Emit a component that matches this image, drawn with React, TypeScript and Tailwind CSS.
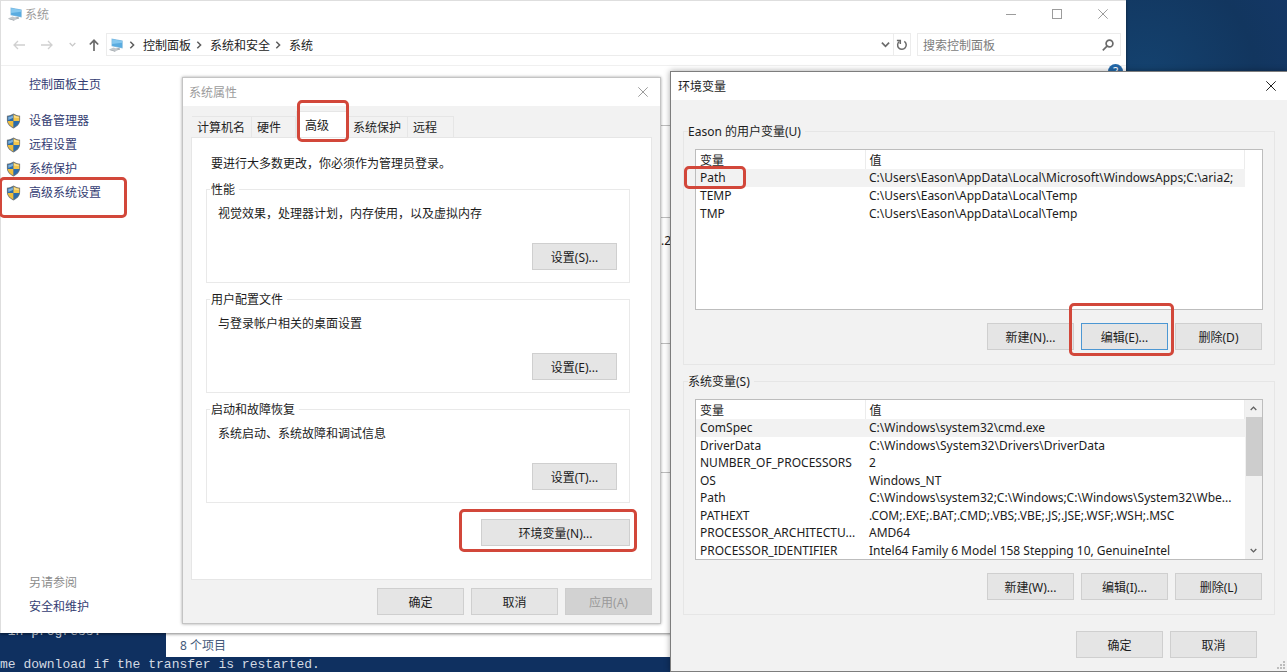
import type { ReactNode } from 'react';

interface Variable {
  name: string;
  value: string;
}

const userVariables: Variable[] = [
  { name: 'Path', value: 'C:\\Users\\Eason\\AppData\\Local\\Microsoft\\WindowsApps;C:\\aria2;' },
  { name: 'TEMP', value: 'C:\\Users\\Eason\\AppData\\Local\\Temp' },
  { name: 'TMP', value: 'C:\\Users\\Eason\\AppData\\Local\\Temp' },
];

const systemVariables: Variable[] = [
  { name: 'ComSpec', value: 'C:\\Windows\\system32\\cmd.exe' },
  { name: 'DriverData', value: 'C:\\Windows\\System32\\Drivers\\DriverData' },
  { name: 'NUMBER_OF_PROCESSORS', value: '2' },
  { name: 'OS', value: 'Windows_NT' },
  { name: 'Path', value: 'C:\\Windows\\system32;C:\\Windows;C:\\Windows\\System32\\Wbe...' },
  { name: 'PATHEXT', value: '.COM;.EXE;.BAT;.CMD;.VBS;.VBE;.JS;.JSE;.WSF;.WSH;.MSC' },
  { name: 'PROCESSOR_ARCHITECTU...', value: 'AMD64' },
  { name: 'PROCESSOR_IDENTIFIER', value: 'Intel64 Family 6 Model 158 Stepping 10, GenuineIntel' },
];

const sidebarLinks = ['设备管理器', '远程设置', '系统保护', '高级系统设置'];

const breadcrumbs = ['控制面板', '系统和安全', '系统'];

const tabs = ['计算机名', '硬件', '高级', '系统保护', '远程'];

const settingGroups = [
  { title: '性能', text: '视觉效果，处理器计划，内存使用，以及虚拟内存', button: '设置(S)...' },
  { title: '用户配置文件', text: '与登录帐户相关的桌面设置', button: '设置(E)...' },
  { title: '启动和故障恢复', text: '系统启动、系统故障和调试信息', button: '设置(T)...' },
];

/* Icons */

function ComputerIcon() {
  return (
    <svg viewBox="0 0 15 14" className="h-[14px] w-[15px] shrink-0">
      <path d="M.5 11.200 4.500 9.600l6 2-4.400 1.900z" fill="#c3c8cc" />
      <path d="M.5 11.200 6.100 13v.8L.5 12z" fill="#9aa1a6" />
      <path d="M7 10.400 10.500 9.800l.6 2-2 .2z" fill="#aab1b6" />
      <path d="M2.500.6 13.700 2.600v7.800L2.500 8.200z" fill="#8dbfe0" />
      <path d="M3.100 1.300 13.100 3.100v6.600L3.100 7.800z" fill="#5aace0" />
      <path d="M3.100 1.300 13.100 3.100v1.600L3.100 6z" fill="#86c8ef" />
    </svg>
  );
}

function ShieldIcon() {
  return (
    <svg viewBox="0 0 15 16" className="h-4 w-[15px] shrink-0">
      <path
        d="M7.500.6C5.600 1.900 3.400 2.600.9 2.700v4.400c0 3.800 2.600 6.700 6.600 8.300 4-1.600 6.600-4.500 6.600-8.300V2.700C11.600 2.600 9.400 1.900 7.500.6z"
        fill="#71767a"
      />
      <path d="M7.500 1.600V8H1.700V3.400C4 3.300 5.900 2.700 7.500 1.600z" fill="#2a6cad" />
      <path d="M7.500 1.600V8h5.800V3.400C11 3.300 9.100 2.700 7.500 1.600z" fill="#f3c64a" />
      <path d="M1.700 8h5.800v6.500C4.300 13.100 2 10.900 1.700 8z" fill="#eebd3c" />
      <path d="M13.300 8H7.500v6.500c3.200-1.400 5.500-3.600 5.800-6.500z" fill="#2a6cad" />
      <path d="M2.300 3.900C4 3.800 5.500 3.300 6.900 2.500v2.600L2.300 7z" fill="#7fb0d8" />
      <path d="M8.100 2.500c1.400.8 2.900 1.300 4.600 1.400v1.200L8.100 4.600z" fill="#fae29a" />
    </svg>
  );
}

function CloseIcon() {
  return (
    <svg viewBox="0 0 10 10" className="size-[10px]" fill="none" stroke="currentColor">
      <path d="M.3.3 9.700 9.700M9.700.3.3 9.700" />
    </svg>
  );
}

function Chevron({ className = 'size-2' }: { className?: string }) {
  return (
    <svg viewBox="0 0 8 8" className={className} fill="none" stroke="currentColor" strokeWidth="1.500">
      <path d="M.8 2.300 4 5.600l3.200-3.300" />
    </svg>
  );
}

/* Shared controls */

function Button({ children, className = 'w-[87px] h-[27px]', state }: {
  children: ReactNode;
  className?: string;
  state?: 'focused' | 'disabled';
}) {
  const stateClasses = {
    normal: 'border-[#cfcfcf] bg-[#e5e5e5] text-[#1c1c1c]',
    focused: 'border-[#4c97d3] bg-[#e5e5e5] text-[#1c1c1c]',
    disabled: 'border-[#cdcdcd] bg-[#d2d2d2] text-[#9a9a9a]',
  };

  return (
    <button
      type="button"
      disabled={state === 'disabled'}
      className={`flex items-center justify-center border pt-0.5 ${stateClasses[state ?? 'normal']} ${className}`}
    >
      {children}
    </button>
  );
}

// Red rounded frame laid over a control the reader should click
function Marker({ className }: { className: string }) {
  return <div className={`pointer-events-none absolute z-10 rounded-[5px] border-[3px] border-[#d2473a] ${className}`} />;
}

function VariableList({ label, rows, scrollable, bodyHeight }: {
  label: string;
  rows: Variable[];
  scrollable?: boolean;
  bodyHeight: string;
}) {
  return (
    <div className="flex h-[161px] overflow-hidden border border-[#bdbdbd] bg-white">
      <div className="min-w-0 flex-1">
        <table aria-label={label} className={`w-full table-fixed border-collapse text-left leading-4 ${bodyHeight}`}>
          <thead>
            <tr>
              <th className="w-[169px] border-r border-[#ececec] p-0 pl-1 pt-[3px] font-normal">变量</th>
              <th className="border-r border-[#ececec] p-0 pl-1 pt-[3px] font-normal">值</th>
            </tr>
          </thead>
          <tbody>
            {rows.map((row, index) => (
              <tr key={index} className={index === 0 ? 'bg-[#f2f2f2]' : ''}>
                <td className="whitespace-nowrap p-0 pl-1 pt-px">{row.name}</td>
                <td className="whitespace-nowrap p-0 pl-1 pt-px">{row.value}</td>
              </tr>
            ))}
          </tbody>
        </table>
      </div>
      <div className={`flex w-[17px] flex-col items-center ${scrollable ? 'bg-[#f1f1f1]' : ''}`}>
        {scrollable && (
          <>
            <button type="button" aria-label="向上滚动" className="flex h-[17px] w-full shrink-0 items-center justify-center text-[#606060]">
              <Chevron className="size-[7px] rotate-180" />
            </button>
            <div className="h-[59px] w-4 bg-[#cdcdcd]" />
            <button type="button" aria-label="向下滚动" className="mt-auto flex h-[17px] w-full shrink-0 items-center justify-center text-[#606060]">
              <Chevron className="size-[7px]" />
            </button>
          </>
        )}
      </div>
    </div>
  );
}

/* Windows */

function SystemWindow() {
  return (
    <section className="absolute left-0 top-0 flex h-[633px] w-[1126px] flex-col border-l border-t border-[#dedede] bg-white shadow-[0_1px_3px_rgba(0,0,0,0.5)]">
      <header className="flex h-[26px] items-center pl-[7px] text-[#9c9c9c]">
        <ComputerIcon />
        <h1 className="ml-0.5 flex-1 pt-0.5">系统</h1>
        <div className="flex">
          <button type="button" aria-label="最小化" className="flex h-[26px] w-[46px] items-center justify-center">
            <span className="h-px w-[10px] bg-[#9c9c9c]" />
          </button>
          <button type="button" aria-label="最大化" className="flex h-[26px] w-[46px] items-center justify-center">
            <span className="size-[10px] border border-[#9c9c9c]" />
          </button>
          <button type="button" aria-label="关闭" className="flex h-[26px] w-[46px] items-center justify-center">
            <CloseIcon />
          </button>
        </div>
      </header>

      {/* Address bar */}
      <nav className="mt-[6px] flex h-[23px] items-center pl-3 pr-[5px]">
        <button type="button" aria-label="后退" className="w-7 text-[#d0d0d0]">
          <svg viewBox="0 0 12 10" className="h-[10px] w-3" fill="none" stroke="currentColor" strokeWidth="1.300">
            <path d="M12 5H1M5 1 1 5l4 4" />
          </svg>
        </button>
        <button type="button" aria-label="前进" className="w-7 text-[#d0d0d0]">
          <svg viewBox="0 0 12 10" className="h-[10px] w-3" fill="none" stroke="currentColor" strokeWidth="1.300">
            <path d="M0 5h11M7 1l4 4-4 4" />
          </svg>
        </button>
        <button type="button" aria-label="最近位置" className="w-5 text-[#c8c8c8]">
          <Chevron className="size-[7px]" />
        </button>
        <button type="button" aria-label="上移" className="w-[17px] text-[#6b6b6b]">
          <svg viewBox="0 0 10 12" className="h-3 w-[10px]" fill="none" stroke="currentColor" strokeWidth="1.700">
            <path d="M5 12V1.500M.8 5.500 5 1.300l4.200 4.200" />
          </svg>
        </button>
        <div className="flex h-full flex-1 items-center border border-[#ececec] pl-0.5 text-[#222]">
          <ComputerIcon />
          {breadcrumbs.map((crumb) => (
            <span key={crumb} className="flex items-center">
              <Chevron className="ml-1 mr-[7px] size-[8px] -rotate-90 text-[#5c5c5c]" />
              <a href="#" className="pt-0.5">{crumb}</a>
            </span>
          ))}
          <button type="button" aria-label="历史记录" className="ml-auto mr-[3px] text-[#6b6b6b]">
            <Chevron className="size-[9px]" />
          </button>
          <button type="button" aria-label="刷新" className="flex h-full w-[17px] items-center justify-center border-l border-[#ececec] text-[#6b6b6b]">
            <svg viewBox="0 0 12 12" className="size-3" fill="none" stroke="currentColor" strokeWidth="1.500">
              <path d="M8.300 2.400A4.300 4.300 0 1 1 3.400 2.500" />
              <path d="M.9 1.600h3.400V5" />
            </svg>
          </button>
        </div>
        <div className="ml-[6px] flex h-full w-[204px] items-center border border-[#ececec] px-[5px]">
          <input
            type="text"
            aria-label="搜索控制面板"
            placeholder="搜索控制面板"
            className="min-w-0 flex-1 pt-0.5 outline-none placeholder:text-[#7c7c7c]"
          />
          <svg viewBox="0 0 12 12" className="mr-px size-3 text-[#6b6b6b]" fill="none" stroke="currentColor" strokeWidth="1.700">
            <circle cx="7.500" cy="4.500" r="3.400" />
            <path d="M5 7.200.8 11.300" />
          </svg>
        </div>
      </nav>

      <div className="mt-[9px] flex flex-1 border-t border-[#f0f0f0]">
        <aside className="flex w-[181px] flex-col pl-[5px] leading-6 text-[#343d73]">
          <a href="#" className="ml-[23px] mt-[7px]">控制面板主页</a>
          <ul className="mt-3">
            {sidebarLinks.map((link) => (
              <li key={link}>
                <a href="#" className="flex items-center gap-2">
                  <ShieldIcon />
                  {link}
                </a>
              </li>
            ))}
          </ul>
          <div className="mb-[14px] ml-[23px] mt-auto">
            <p className="text-[#8b8b8b]">另请参阅</p>
            <a href="#">安全和维护</a>
          </div>
        </aside>

        {/* Mostly hidden by the dialogs, only the rules on the right stay visible */}
        <main className="w-[489px] pt-[59px]">
          <div className="h-[92px] border-t border-[#bfbfbf]" />
          <div className="h-[126px] border-t border-[#bfbfbf] pt-[15px] text-right">2.2</div>
          <div className="h-[129px] border-t border-[#bfbfbf]" />
          <div className="border-t border-[#bfbfbf]" />
        </main>
        <div className="flex flex-1 justify-end pr-[3px]">
          <button type="button" aria-label="帮助" className="mt-[-2px] size-[15px] rounded-full bg-[#2468a8] leading-[15px] text-white">
            ?
          </button>
        </div>
      </div>
      <Marker className="left-[-2px] top-[176px] h-[41px] w-[128px]" />
    </section>
  );
}

function PropertiesWindow() {
  return (
    <section className="absolute left-[182px] top-[77px] w-[479px] border border-[#c4c4c4] bg-[#f2f2f2] shadow-[0_0_3px_rgba(0,0,0,0.35)]">
      <header className="flex h-7 items-center justify-between bg-white pl-[6px] pr-3 text-[#9c9c9c]">
        <h2 className="pt-0.5">系统属性</h2>
        <button type="button" aria-label="关闭">
          <CloseIcon />
        </button>
      </header>

      <div className="px-2 pb-2">
        <div role="tablist" className="flex h-[31px] items-end pl-px">
          {tabs.map((tab) => (
            <button
              key={tab}
              type="button"
              role="tab"
              aria-selected={tab === '高级'}
              className={
                tab === '高级'
                  ? 'h-[26px] w-[52px] border-x border-t border-[#e6e6e6] bg-white pr-2.5 pt-0.5'
                  : 'h-[21px] border-r border-t border-[#e6e6e6] pl-[5px] pr-[6px] pt-0.5 text-[#222] last:pr-4 nth-2:pr-[14px]'
              }
            >
              {tab}
            </button>
          ))}
        </div>

        <div role="tabpanel" className="border border-[#e6e6e6] bg-white px-[14px] pb-[33px] pt-[17px]">
          <p className="mb-[7px] ml-[5px] leading-[18px]">要进行大多数更改，你必须作为管理员登录。</p>
          <div className="mr-[7px] flex flex-col gap-[7px]">
            {settingGroups.map((group) => (
              <fieldset key={group.title} className="border border-[#e9e9e9] px-[3px] pb-3">
                <legend className="pl-px pr-1 pt-px leading-[17px]">{group.title}</legend>
                <p className="ml-2 mt-[7px] leading-[18px]">{group.text}</p>
                <Button className="ml-auto mr-[9px] mt-5 h-[27px] w-[85px]">{group.button}</Button>
              </fieldset>
            ))}
          </div>
          <Button className="ml-auto mr-[7px] mt-4 h-[27px] w-[149px]">环境变量(N)...</Button>
        </div>

        <div className="mt-2 flex justify-end gap-[7px]">
          <Button>确定</Button>
          <Button>取消</Button>
          <Button state="disabled">应用(A)</Button>
        </div>
      </div>
      <Marker className="left-[114px] top-[22px] h-[42px] w-[52px]" />
      <Marker className="left-[276px] top-[431px] h-[43px] w-[178px]" />
    </section>
  );
}

function EnvironmentWindow() {
  return (
    <section className="absolute left-[670px] right-0 top-[71px] border border-r-0 border-[#7d7d7d] bg-[#f2f2f2] shadow-[0_0_6px_rgba(0,0,0,0.35)]">
      <header className="flex h-7 items-center justify-between bg-white pl-[7px] pr-[11px]">
        <h2 className="pt-0.5">环境变量</h2>
        <button type="button" aria-label="关闭" className="text-[#222]">
          <CloseIcon />
        </button>
      </header>

      <div className="flex flex-col gap-[7px] px-3 pb-[13px] pt-[22px]">
        <fieldset className="border border-[#e6e6e6] px-1 pb-[14px]">
          <legend className="pr-1 pt-px leading-[17px]">Eason 的用户变量(U)</legend>
          <div className="ml-[7px] mr-[7px] mt-[9px]">
            <VariableList label="用户变量" rows={userVariables} bodyHeight="h-[72px]" />
            <div className="mr-px mt-[13px] flex justify-end gap-[7px]">
              <Button>新建(N)...</Button>
              <Button state="focused">编辑(E)...</Button>
              <Button>删除(D)</Button>
            </div>
          </div>
        </fieldset>

        <fieldset className="border border-[#e6e6e6] px-1 pb-[14px]">
          <legend className="pr-1 pt-px leading-[17px]">系统变量(S)</legend>
          <div className="ml-[7px] mr-[7px] mt-[9px]">
            <VariableList label="系统变量" rows={systemVariables} scrollable bodyHeight="h-[159px]" />
            <div className="mr-px mt-[13px] flex justify-end gap-[7px]">
              <Button>新建(W)...</Button>
              <Button>编辑(I)...</Button>
              <Button>删除(L)</Button>
            </div>
          </div>
        </fieldset>

        <div className="mr-[18px] mt-[9px] flex justify-end gap-[7px]">
          <Button>确定</Button>
          <Button>取消</Button>
        </div>
      </div>

      <svg viewBox="0 0 9 9" className="absolute bottom-px right-px size-[9px]" fill="#bdbdbd">
        <path d="M6 0h2v2H6zM3 3h2v2H3zM6 3h2v2H6zM0 6h2v2H0zM3 6h2v2H3zM6 6h2v2H6z" />
      </svg>
      <Marker className="left-[13px] top-[94px] h-[23px] w-[62px]" />
      <Marker className="right-[113px] top-[231px] h-[53px] w-[105px]" />
    </section>
  );
}

export default function App() {
  return (
    <div className="relative min-h-screen w-full overflow-hidden bg-[#0f3060] font-['Noto_Sans','Noto_Sans_CJK_SC',sans-serif] text-xs text-[#1c1c1c]">
      {/* Wallpaper */}
      <div className="absolute inset-x-0 top-0 h-24 bg-[radial-gradient(circle_at_89%_80%,#14426f_0,#12365f_110px,#15386a_200px)]" />

      {/* Terminal output behind the windows */}
      <div className="absolute bottom-0 left-0 flex flex-col gap-4 bg-[#0f3060] font-['Liberation_Mono',monospace] text-[13px] leading-4 text-[#d3dae3]">
        <p className="w-[110px] whitespace-pre">{' in progress.'}</p>
        <p className="whitespace-pre pt-px leading-[15px]">me download if the transfer is restarted.</p>
      </div>

      {/* Explorer window, only its status bar shows */}
      <section className="absolute left-[166px] top-[300px] flex h-[357px] w-[600px] flex-col justify-end bg-white">
        <p className="pl-[14px] leading-[22px] text-[#44597a]">8 个项目</p>
      </section>

      <SystemWindow />
      <PropertiesWindow />
      <EnvironmentWindow />
    </div>
  );
}
